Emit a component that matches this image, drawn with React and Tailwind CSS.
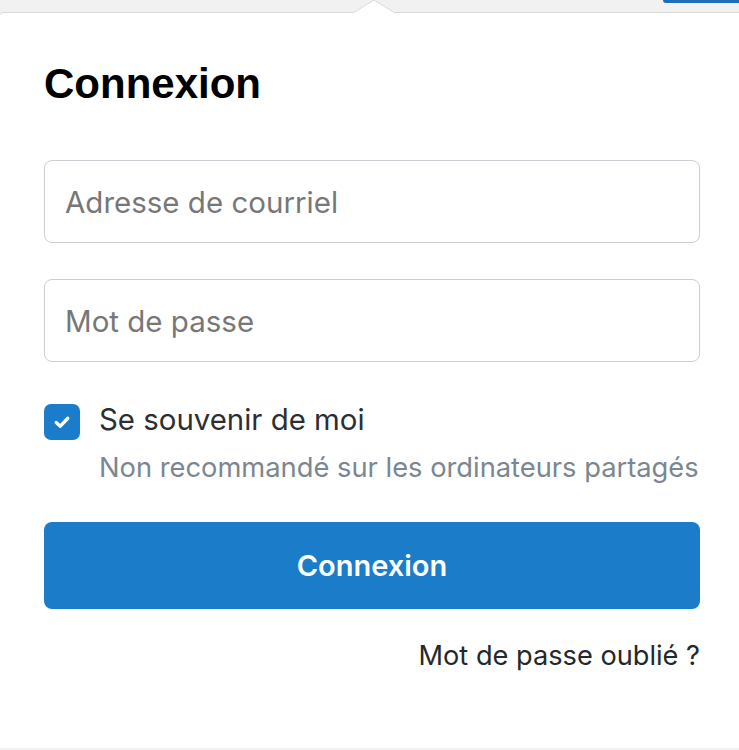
import { useState } from 'react'

const Caret = () => (
  <svg className="absolute left-[353px] top-0" width="42" height="14" viewBox="0 0 42 14">
    <path d="M0 13 L21 0 L42 13" fill="#ffffff" stroke="#d9d9d9" strokeWidth="1" />
    <rect x="1" y="12.5" width="40" height="2" fill="#ffffff" />
  </svg>
)

const CheckIcon = () => (
  <svg width="20" height="20" viewBox="0 0 24 24" fill="none" stroke="#ffffff" strokeWidth="4" strokeLinecap="round" strokeLinejoin="round">
    <path d="M5 12.5 L10 17 L19 7.5" />
  </svg>
)

export default function App() {
  const [remember, setRemember] = useState(true)

  return (
    <div className="w-[739px] h-[750px] bg-[#f2f2f2] flex flex-col font-['Inter','Noto_Sans',sans-serif] overflow-hidden">
      <div className="relative h-[12px] shrink-0 bg-[#f1f1f1]">
        <div className="absolute right-0 top-0 w-[76px] h-[3px] bg-[#1a6fb8] rounded-bl-[6px]" />
        <Caret />
      </div>
      <div className="flex-1 bg-white border-t border-[#d9d9d9] rounded-tl-[4px] pl-[44px] pr-[39px] pt-[50px] flex flex-col mb-[2px]">
        <h1 className="font-['Liberation_Sans','Arial',sans-serif] font-bold text-[42px] leading-none text-black">Connexion</h1>

        <input
          type="email"
          placeholder="Adresse de courriel"
          className="mt-[55px] h-[83px] w-full border border-[#c9ced3] rounded-[8px] px-[20px] text-[29.5px] text-[#333] placeholder:text-[#777] outline-none"
        />
        <input
          type="password"
          placeholder="Mot de passe"
          className="mt-[36px] h-[83px] w-full border border-[#c9ced3] rounded-[8px] px-[20px] text-[29.5px] text-[#333] placeholder:text-[#777] outline-none"
        />

        <div className="mt-[42px] flex items-start gap-[19px]">
          <button
            onClick={() => setRemember(!remember)}
            className={`w-[36px] h-[36px] shrink-0 rounded-[7px] flex items-center justify-center ${remember ? 'bg-[#1b7ccb]' : 'bg-white border border-[#c9ced3]'}`}
          >
            {remember && <CheckIcon />}
          </button>
          <div className="flex flex-col">
            <span className="text-[29.4px] leading-[32px] text-[#2b2f33]">Se souvenir de moi</span>
            <span className="mt-[16px] text-[27.3px] leading-[32px] text-[#7b8693]">Non recommandé sur les ordinateurs partagés</span>
          </div>
        </div>

        <button className="mt-[38px] h-[87px] w-full rounded-[8px] bg-[#1b7cc9] text-white text-[29px] font-semibold">
          Connexion
        </button>

        <div className="mt-[30px] flex justify-end">
          <a href="#" className="text-[27.2px] leading-[34px] text-[#24282c]">Mot de passe oublié ?</a>
        </div>
      </div>
    </div>
  )
}
